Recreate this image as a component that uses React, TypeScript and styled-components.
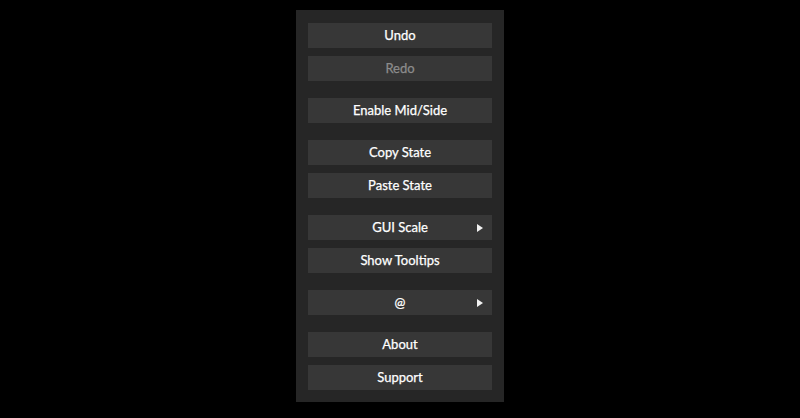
import React from 'react';
import styled, { createGlobalStyle } from 'styled-components';

const GlobalStyle = createGlobalStyle`
    html, body {
        margin: 0;
        padding: 0;
        background: #000;
        font-family: Lato, "Noto Sans", sans-serif;
    }
`;

type Item = { label: string; disabled?: boolean; submenu?: boolean };

const groups: Item[][] = [
    [{ label: 'Undo' }, { label: 'Redo', disabled: true }],
    [{ label: 'Enable Mid/Side' }],
    [{ label: 'Copy State' }, { label: 'Paste State' }],
    [{ label: 'GUI Scale', submenu: true }, { label: 'Show Tooltips' }],
    [{ label: '@', submenu: true }],
    [{ label: 'About' }, { label: 'Support' }],
];

const App: any = () => {
    return (
        <Page>
            <GlobalStyle />
            <Menu>
                {groups.map((group, gi) => (
                    <Group key={gi}>
                        {group.map((item) => (
                            <MenuButton key={item.label} $disabled={item.disabled}>
                                {item.label}
                                {item.submenu && <Arrow />}
                            </MenuButton>
                        ))}
                    </Group>
                ))}
            </Menu>
        </Page>
    );
}

export default App;

const Page = styled.div`
    width: 800px;
    height: 418px;
    display: flex;
    justify-content: center;
    align-items: flex-start;
    padding-top: 10px;
    box-sizing: border-box;
`;

const Menu = styled.div`
    width: 208px;
    box-sizing: border-box;
    padding: 13px 12px 12px;
    background: #262626;
    display: flex;
    flex-direction: column;
    gap: 17px;
`;

const Group = styled.div`
    display: flex;
    flex-direction: column;
    gap: 8px;
`;

const MenuButton = styled.div<{ $disabled?: boolean }>`
    position: relative;
    height: 25px;
    box-sizing: border-box;
    padding-bottom: 1px;
    display: flex;
    align-items: center;
    justify-content: center;
    background: #373737;
    color: ${p => p.$disabled ? '#8c8c8c' : '#ffffff'};
    font-size: 13px;
    font-weight: 400;
    -webkit-text-stroke: 0.25px currentColor;
`;

const Arrow = styled.span`
    position: absolute;
    right: 9px;
    top: 50%;
    margin-top: -4px;
    width: 0;
    height: 0;
    border-top: 4px solid transparent;
    border-bottom: 4px solid transparent;
    border-left: 6px solid #f2f2f2;
`;
